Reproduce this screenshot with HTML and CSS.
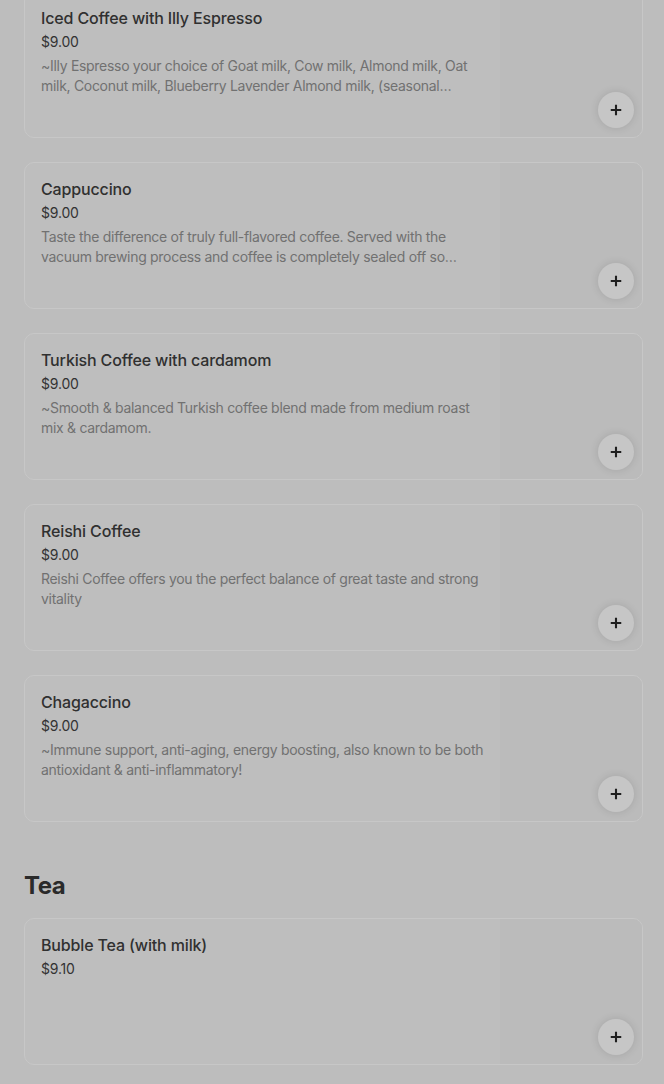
FILE: index.html
```html
<!DOCTYPE html>
<html lang="en">
<head>
    <meta charset="UTF-8">
    <meta name="viewport" content="width=device-width, initial-scale=1.0">
    <title>Menu</title>
    <link rel="stylesheet" href="styles.css">
</head>
<body>

    <div class="menu">
        <div class="section">
            <div class="item">
                <div class="info">
                    <h3>Iced Coffee with Illy Espresso</h3>
                    <p class="price">$9.00</p>
                    <p class="desc">~Illy Espresso your choice of Goat milk, Cow milk, Almond milk, Oat milk, Coconut milk, Blueberry Lavender Almond milk, (seasonal flavors available upon request)</p>
                </div>
                <div class="photo"></div>
                <button class="add" aria-label="Add">
                    <svg viewBox="0 0 16 16" width="14" height="14"><path d="M8 2v12M2 8h12" stroke="currentColor" stroke-width="2.4"/></svg>
                </button>
            </div>

            <div class="item">
                <div class="info">
                    <h3>Cappuccino</h3>
                    <p class="price">$9.00</p>
                    <p class="desc">Taste the difference of truly full-flavored coffee. Served with the vacuum brewing process and coffee is completely sealed off so nothing escapes.</p>
                </div>
                <div class="photo"></div>
                <button class="add" aria-label="Add">
                    <svg viewBox="0 0 16 16" width="14" height="14"><path d="M8 2v12M2 8h12" stroke="currentColor" stroke-width="2.4"/></svg>
                </button>
            </div>

            <div class="item">
                <div class="info">
                    <h3>Turkish Coffee with cardamom</h3>
                    <p class="price">$9.00</p>
                    <p class="desc">~Smooth &amp; balanced Turkish coffee blend made from medium roast mix &amp; cardamom.</p>
                </div>
                <div class="photo"></div>
                <button class="add" aria-label="Add">
                    <svg viewBox="0 0 16 16" width="14" height="14"><path d="M8 2v12M2 8h12" stroke="currentColor" stroke-width="2.4"/></svg>
                </button>
            </div>

            <div class="item">
                <div class="info">
                    <h3>Reishi Coffee</h3>
                    <p class="price">$9.00</p>
                    <p class="desc">Reishi Coffee offers you the perfect balance of great taste and strong vitality</p>
                </div>
                <div class="photo"></div>
                <button class="add" aria-label="Add">
                    <svg viewBox="0 0 16 16" width="14" height="14"><path d="M8 2v12M2 8h12" stroke="currentColor" stroke-width="2.4"/></svg>
                </button>
            </div>

            <div class="item">
                <div class="info">
                    <h3>Chagaccino</h3>
                    <p class="price">$9.00</p>
                    <p class="desc">~Immune support, anti-aging, energy boosting, also known to be both antioxidant &amp; anti-inflammatory!</p>
                </div>
                <div class="photo"></div>
                <button class="add" aria-label="Add">
                    <svg viewBox="0 0 16 16" width="14" height="14"><path d="M8 2v12M2 8h12" stroke="currentColor" stroke-width="2.4"/></svg>
                </button>
            </div>
        </div>

        <div class="section">
            <h2>Tea</h2>
            <div class="item">
                <div class="info">
                    <h3>Bubble Tea (with milk)</h3>
                    <p class="price">$9.10</p>
                </div>
                <div class="photo"></div>
                <button class="add" aria-label="Add">
                    <svg viewBox="0 0 16 16" width="14" height="14"><path d="M8 2v12M2 8h12" stroke="currentColor" stroke-width="2.4"/></svg>
                </button>
            </div>
        </div>
    </div>

</body>
</html>
```

FILE: styles.css
```css
* {
    margin: 0;
    padding: 0;
    box-sizing: border-box;
    font-family: 'Inter', 'Roboto', sans-serif;
}

body {
    background: #bdbdbd;
    color: #2a2a2a;
    overflow: hidden;
}

.menu {
    margin-top: -9px;
    padding: 0 21px 0 24px;
}

.section {
    display: flex;
    flex-direction: column;
    gap: 24px;
}

.section h2 {
    font-size: 24px;
    font-weight: 700;
    line-height: 32px;
    letter-spacing: -0.5px;
    color: #2a2a2a;
    margin-top: 48px;
    margin-bottom: -8px;
}

.item {
    position: relative;
    display: flex;
    height: 147px;
    border: 1px solid #c7c7c7;
    border-radius: 10px;
    background: #bebebe;
    overflow: hidden;
}

.info {
    flex: 1;
    padding: 15px 16px 16px 16px;
    min-width: 0;
}

.info h3 {
    font-size: 16px;
    font-weight: 500;
    line-height: 22px;
    letter-spacing: -0.15px;
    color: #303030;
}

.price {
    margin-top: 3px;
    font-size: 14px;
    line-height: 20px;
    letter-spacing: -0.2px;
    color: #333;
}

.desc {
    margin-top: 4px;
    font-size: 14px;
    line-height: 20px;
    color: #717171;
    display: -webkit-box;
    -webkit-line-clamp: 2;
    -webkit-box-orient: vertical;
    overflow: hidden;
    letter-spacing: -0.3px;
}

.photo {
    width: 142px;
    flex-shrink: 0;
    background: #bbbbbb;
}

.add {
    position: absolute;
    right: 8px;
    bottom: 9px;
    width: 36px;
    height: 36px;
    border: none;
    border-radius: 50%;
    background: #c6c6c6;
    color: #1f1f1f;
    box-shadow: 0 0 8px rgba(0, 0, 0, 0.12);
    display: flex;
    align-items: center;
    justify-content: center;
    cursor: pointer;
}
```
